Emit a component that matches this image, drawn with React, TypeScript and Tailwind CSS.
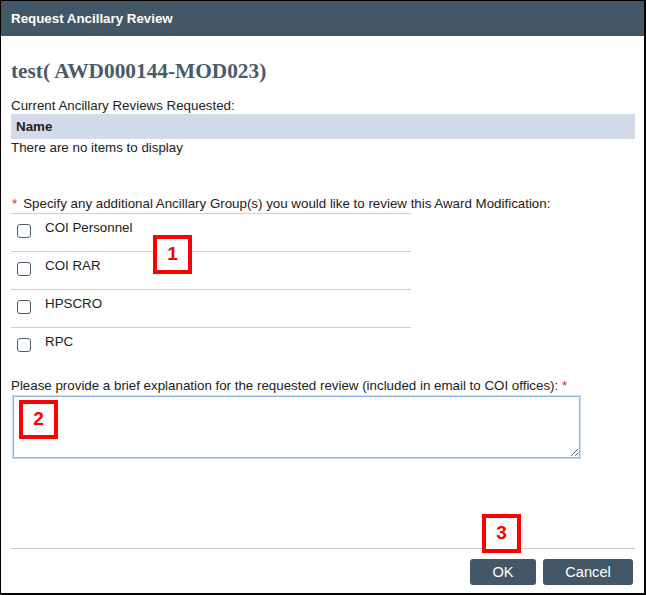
import React from "react";

const Box = ({ n, className }: { n: string; className: string }) => (
  <div
    className={`absolute w-[39px] h-[39px] border-[4px] border-[#ff0000] bg-white flex items-center justify-center text-[#ff0000] font-bold text-[19px] ${className}`}
  >
    {n}
  </div>
);

const groups = ["COI Personnel", "COI RAR", "HPSCRO", "RPC"];

export default function App() {
  return (
    <div
      className="relative w-[646px] h-[595px] bg-white border-l border-t border-black border-r-2 border-b-2 flex flex-col text-[#222]"
      style={{ fontFamily: '"Liberation Sans", Arial, sans-serif' }}
    >
      <div className="h-[35px] bg-[#435767] flex items-center pl-[10px] text-white font-bold text-[13.33px]">
        Request Ancillary Review
      </div>
      <div className="flex-1 flex flex-col pl-[10px] pr-[9px]">
        <h1
          className="mt-[23px] text-[21.33px] leading-[25px] font-bold text-[#4a5a68]"
          style={{ fontFamily: '"Liberation Serif", "Times New Roman", serif' }}
        >
          test( AWD000144-MOD023)
        </h1>
        <div className="mt-[14px] text-[13.33px] leading-[16px]">Current Ancillary Reviews Requested:</div>
        <div className="h-[25px] bg-[#d3dbea] flex items-center pl-[5px] text-[13.33px] font-bold">Name</div>
        <div className="text-[13.33px] leading-[17px]">There are no items to display</div>

        <div className="mt-[40px] w-[400px] border-b border-[#cfcfcf] text-[13.33px] leading-[15px] pb-[2px] pl-[1px] whitespace-nowrap">
          <span className="text-[#e02020] mr-[6px]">*</span>
          <span>Specify any additional Ancillary Group(s) you would like to review this Award Modification:</span>
        </div>
        <div className="w-[400px] flex flex-col">
          {groups.map((g, i) => (
            <div
              key={g}
              className={`h-[38px] flex items-start ${i < groups.length - 1 ? "border-b border-[#cfcfcf]" : ""}`}
            >
              <span className="mt-[10px] ml-[6px] w-[14px] h-[14px] rounded-[3px] border border-[#4f5e6a] bg-white" />
              <span className="ml-[14px] mt-[6px] text-[13.33px] leading-[16px]">{g}</span>
            </div>
          ))}
        </div>

        <div className="mt-[12px] text-[13.33px] leading-[15px]">
          Please provide a brief explanation for the requested review (included in email to COI offices):{" "}
          <span className="text-[#e02020]">*</span>
        </div>
        <textarea className="mt-[3px] ml-[2px] w-[567px] h-[62px] border border-[#8fb5ef] shadow-[0_0_0_1px_#c9dcf8] outline-none bg-white" />

        <div className="flex-1" />
        <div className="border-t border-[#c8c8c8]" />
        <div className="flex justify-end gap-[7px] pt-[10px] pb-[8px] pr-[2px]">
          <button className="w-[66px] h-[26px] rounded-[3px] bg-[#435767] text-white text-[14.67px]">OK</button>
          <button className="w-[90px] h-[26px] rounded-[3px] bg-[#435767] text-white text-[14.67px]">Cancel</button>
        </div>
      </div>
      <Box n="1" className="left-[152px] top-[234px]" />
      <Box n="2" className="left-[18px] top-[399px]" />
      <Box n="3" className="left-[481px] top-[513px]" />
    </div>
  );
}
